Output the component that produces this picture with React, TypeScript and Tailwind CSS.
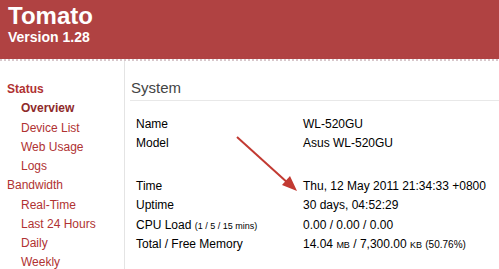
import React from 'react'

const sub = ['Overview', 'Device List', 'Web Usage', 'Logs']
const bw = ['Real-Time', 'Last 24 Hours', 'Daily', 'Weekly']

function Row({ label, value }: { label: React.ReactNode; value: React.ReactNode }) {
  return (
    <div className="flex h-[19.5px] items-center">
      <div className="w-[167px]">{label}</div>
      <div>{value}</div>
    </div>
  )
}

export default function App() {
  return (
    <div className="relative h-[269px] w-[499px] overflow-hidden bg-white font-['Liberation_Sans',Arial,sans-serif] text-[12px] text-black">
      <div className="h-[59px] bg-[#b04242] px-[8px] pt-[2px] text-white">
        <div className="text-[24px] font-bold leading-[28px]">Tomato</div>
        <div className="text-[14px] font-bold leading-[14px]">Version 1.28</div>
      </div>
      <div className="h-[2px] bg-[repeating-linear-gradient(90deg,#d8c8cc_0px,#d8c8cc_2px,transparent_2px,transparent_4px)]" />
      <div className="flex">
        <div className="w-[125px] border-r border-[#e4e4e4] pt-[19px] text-[#b03232]">
          <div className="h-[19.25px] pl-[7px] font-bold leading-[19px]">Status</div>
          {sub.map((s, i) => (
            <div key={s} className={`h-[19.25px] pl-[21px] leading-[19px] ${i === 0 ? 'font-bold text-[#8e2a2a]' : ''}`}>{s}</div>
          ))}
          <div className="h-[19.25px] pl-[7px] leading-[19px]">Bandwidth</div>
          {bw.map((s) => (
            <div key={s} className="h-[19.25px] pl-[21px] leading-[19px]">{s}</div>
          ))}
        </div>
        <div className="flex-1 pl-[5px] pt-[18px]">
          <div className="border-b border-[#e8e8e8] pb-[3px] pl-[1px] text-[15px] leading-[18px] text-[#444]">System</div>
          <div className="pl-[6px] pt-[13px]">
            <Row label="Name" value="WL-520GU" />
            <Row label="Model" value="Asus WL-520GU" />
            <div className="h-[23px]" />
            <Row label="Time" value="Thu, 12 May 2011 21:34:33 +0800" />
            <Row label="Uptime" value="30 days, 04:52:29" />
            <Row
              label={<>CPU Load <span className="text-[9px]">(1 / 5 / 15 mins)</span></>}
              value="0.00 / 0.00 / 0.00"
            />
            <Row
              label="Total / Free Memory"
              value={<>14.04 <span className="text-[9px]">MB</span> / 7,300.00 <span className="text-[9px]">KB</span> <span className="text-[10px]">(50.76%)</span></>}
            />
          </div>
        </div>
      </div>
      <svg className="absolute left-0 top-0" width="499" height="269" viewBox="0 0 499 269">
        <line x1="237" y1="137" x2="289" y2="184" stroke="#c23a32" strokeWidth="2" />
        <polygon points="297,191 282,185 290,176" fill="#c23a32" />
      </svg>
    </div>
  )
}
